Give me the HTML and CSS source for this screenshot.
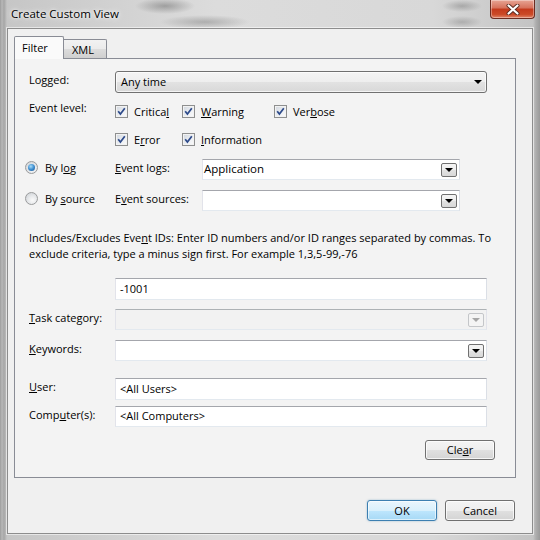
FILE: index.html
```html
<!DOCTYPE html>
<html>
<head>
<meta charset="utf-8">
<link rel="stylesheet" href="styles.css">
</head>
<body>
<div class="window">
  <div class="titlebar">
    <span class="title">Create Custom View</span>
    <div class="close">
      <svg width="14" height="11" viewBox="0 0 14 11"><path d="M2.5 1.5 L11.5 9.5 M11.5 1.5 L2.5 9.5" stroke="#5a2a20" stroke-width="4" stroke-linecap="round"/><path d="M2.5 1.5 L11.5 9.5 M11.5 1.5 L2.5 9.5" stroke="#ffffff" stroke-width="2.2" stroke-linecap="round"/></svg>
    </div>
  </div>
  <div class="client">
    <div class="tabs">
      <div class="tab active">Filter</div>
      <div class="tab">XML</div>
    </div>
    <div class="panel">
      <div class="row r-logged">
        <span class="lbl">Logged:</span>
        <div class="select"><span>Any time</span><span class="tri"></span></div>
      </div>
      <div class="row r-level1">
        <span class="lbl">Event level:</span>
        <div class="checks">
          <span class="chk w1"><span class="cb"><svg width="11" height="11" viewBox="0 0 11 11"><path d="M2.2 5.2 L4.4 8 L8.8 2.2" stroke="#2d4a8a" stroke-width="1.7" fill="none"/></svg></span><span>Critica<u>l</u></span></span>
          <span class="chk w2"><span class="cb"><svg width="11" height="11" viewBox="0 0 11 11"><path d="M2.2 5.2 L4.4 8 L8.8 2.2" stroke="#2d4a8a" stroke-width="1.7" fill="none"/></svg></span><span><u>W</u>arning</span></span>
          <span class="chk"><span class="cb"><svg width="11" height="11" viewBox="0 0 11 11"><path d="M2.2 5.2 L4.4 8 L8.8 2.2" stroke="#2d4a8a" stroke-width="1.7" fill="none"/></svg></span><span>Ver<u>b</u>ose</span></span>
        </div>
      </div>
      <div class="row r-level2">
        <span class="lbl"></span>
        <div class="checks">
          <span class="chk w1"><span class="cb"><svg width="11" height="11" viewBox="0 0 11 11"><path d="M2.2 5.2 L4.4 8 L8.8 2.2" stroke="#2d4a8a" stroke-width="1.7" fill="none"/></svg></span><span>E<u>r</u>ror</span></span>
          <span class="chk w2"><span class="cb"><svg width="11" height="11" viewBox="0 0 11 11"><path d="M2.2 5.2 L4.4 8 L8.8 2.2" stroke="#2d4a8a" stroke-width="1.7" fill="none"/></svg></span><span><u>I</u>nformation</span></span>
        </div>
      </div>
      <div class="row r-log">
        <span class="lbl radio-lbl"><span class="radio on"></span><span>By l<u>o</u>g</span></span>
        <span class="lbl2"><u>E</u>vent logs:</span>
        <div class="combo short"><span class="val">Application</span><span class="dbtn"><span class="tri"></span></span></div>
      </div>
      <div class="row r-source">
        <span class="lbl radio-lbl"><span class="radio"></span><span>By <u>s</u>ource</span></span>
        <span class="lbl2">E<u>v</u>ent sources:</span>
        <div class="combo short"><span class="val"></span><span class="dbtn"><span class="tri"></span></span></div>
      </div>
      <p class="desc">Includes/Excludes Eve<u>n</u>t IDs: Enter ID numbers and/or ID ranges separated by commas. To<br>exclude criteria, type a minus sign first. For example 1,3,5-99,-76</p>
      <div class="row r-ids">
        <span class="lbl"></span>
        <div class="input">-1001</div>
      </div>
      <div class="row r-task">
        <span class="lbl"><u>T</u>ask category:</span>
        <div class="combo disabled"><span class="val"></span><span class="dbtn"><span class="tri"></span></span></div>
      </div>
      <div class="row r-kw">
        <span class="lbl"><u>K</u>eywords:</span>
        <div class="combo"><span class="val"></span><span class="dbtn"><span class="tri"></span></span></div>
      </div>
      <div class="row r-user">
        <span class="lbl"><u>U</u>ser:</span>
        <div class="input">&lt;All Users&gt;</div>
      </div>
      <div class="row r-comp">
        <span class="lbl">Comp<u>u</u>ter(s):</span>
        <div class="input">&lt;All Computers&gt;</div>
      </div>
      <div class="row r-clear">
        <button class="btn clear">Cle<u>a</u>r</button>
      </div>
    </div>
    <div class="footer">
      <button class="btn ok">OK</button>
      <button class="btn">Cancel</button>
    </div>
  </div>
</div>
</body>
</html>
```

FILE: styles.css
```css
html, body {
  margin: 0;
  padding: 0;
}
body {
  width: 540px;
  height: 540px;
  overflow: hidden;
  font-family: "Open Sans", "Segoe UI", sans-serif;
  font-size: 11px;
  color: #000;
}
.window {
  width: 540px;
  height: 540px;
  box-sizing: border-box;
  padding: 0 7px 6px 7px;
  display: flex;
  flex-direction: column;
  background:
    radial-gradient(ellipse 30px 8px at 165px 6px, rgba(90,90,90,0.45), rgba(90,90,90,0) 100%),
    radial-gradient(ellipse 45px 7px at 205px 22px, rgba(90,90,90,0.35), rgba(90,90,90,0) 100%),
    radial-gradient(ellipse 20px 6px at 462px 6px, rgba(90,90,90,0.35), rgba(90,90,90,0) 100%),
    radial-gradient(ellipse 20px 6px at 462px 22px, rgba(90,90,90,0.3), rgba(90,90,90,0) 100%),
    linear-gradient(to right, #9c9c9c 0px, #b8b8b8 2px, #a6a6a6 4px, #c6c6c6 7px, #dcdcdc 40%, #d8d8d8 80%, #c4c4c4 533px, #adadad 536px, #9a9a9a 540px);
}
.titlebar {
  height: 28px;
  margin: 0 -7px;
  display: flex;
  justify-content: space-between;
  align-items: flex-start;
}
.title {
  margin: 6px 0 0 11px;
  font-size: 11.5px;
  color: #000;
  text-shadow: 0 0 6px #ffffff, 0 0 3px #ffffff;
}
.close {
  width: 45px;
  height: 19px;
  margin-right: 5px;
  box-sizing: border-box;
  border: 1px solid #6b2c21;
  border-top: none;
  border-radius: 0 0 4px 4px;
  background: linear-gradient(to bottom, #e7a595 0%, #d6705a 45%, #c3391c 50%, #cb4a27 80%, #e0866a 100%);
  box-shadow: inset 0 0 0 1px rgba(255,255,255,0.35);
  display: flex;
  align-items: center;
  justify-content: center;
}
.client {
  flex: 1;
  background: #f0f0f0;
  border: 1px solid #8d8d8d;
  box-shadow: 0 0 0 1px rgba(255,255,255,0.55);
  padding: 7px 0 0 6px;
  display: flex;
  flex-direction: column;
}
.tabs {
  display: flex;
  align-items: flex-end;
  height: 22px;
}
.tab {
  box-sizing: border-box;
  height: 19px;
  width: 43px;
  border: 1px solid #898c95;
  border-bottom: none;
  border-left: none;
  border-radius: 0 2px 0 0;
  background: linear-gradient(to bottom, #f2f2f2, #ebebeb 50%, #dddddd 50%, #cfcfcf);
  padding: 2px 0 0 8px;
}
.tab.active {
  width: 50px;
  height: 23px;
  border-left: 1px solid #898c95;
  border-radius: 2px 2px 0 0;
  background: #fafafa;
  padding: 3px 0 0 7px;
  margin-bottom: -1px;
  position: relative;
  z-index: 1;
}
.panel {
  box-sizing: border-box;
  width: 502px;
  height: 420px;
  border: 1px solid #898c95;
  background: #f3f3f3;
  padding: 12px 28px 0 14px;
  display: flex;
  flex-direction: column;
}
.row {
  display: flex;
  align-items: center;
}
.lbl {
  width: 86px;
  flex: none;
  padding-bottom: 2px;
}
.lbl2 {
  width: 87px;
  flex: none;
  padding-bottom: 3px;
}
.r-logged { height: 22px; }
.r-level1 { height: 22px; margin-top: 7px; }
.r-level2 { height: 22px; margin-top: 6px; }
.r-log { height: 21px; margin-top: 9px; }
.r-source { height: 21px; margin-top: 10px; }
.r-ids { height: 22px; margin-top: 16px; }
.r-task { height: 21px; margin-top: 9px; }
.r-kw { height: 21px; margin-top: 10px; }
.r-user { height: 22px; margin-top: 17px; }
.r-comp { height: 21px; margin-top: 6px; }
.r-clear { margin-top: 13px; justify-content: flex-end; margin-right: -8px; }
.r-logged .lbl { padding-bottom: 5px; }
.r-level1 .lbl { padding-bottom: 7px; }
.r-log .lbl, .r-source .lbl, .r-log .lbl2, .r-source .lbl2 { padding-bottom: 5px; }
.r-task .lbl, .r-kw .lbl { padding-bottom: 4px; }
.r-user .lbl, .r-comp .lbl { padding-bottom: 5px; }

.select {
  flex: 1;
  height: 22px;
  box-sizing: border-box;
  border: 1px solid #707070;
  border-radius: 3px;
  background: linear-gradient(to bottom, #f4f4f4 0%, #eeeeee 50%, #e2e2e2 51%, #d8d8d8 100%);
  box-shadow: inset 0 0 0 1px rgba(255,255,255,0.7);
  display: flex;
  align-items: center;
  justify-content: space-between;
  padding: 0 4px 1px 5px;
}
.tri {
  width: 0;
  height: 0;
  border-left: 4px solid transparent;
  border-right: 4px solid transparent;
  border-top: 4px solid #000;
}
.checks {
  display: flex;
  align-items: center;
}
.chk {
  display: flex;
  align-items: center;
  gap: 6px;
}
.chk.w1 { width: 67px; }
.chk.w2 { width: 92px; }
.cb {
  width: 13px;
  height: 13px;
  box-sizing: border-box;
  border: 1px solid #8e8f8f;
  background: linear-gradient(135deg, #d0d6de 0%, #eef0f3 60%, #fbfbfb 100%);
  box-shadow: inset 0 0 0 1px #f2f2f2;
  display: flex;
  align-items: center;
  justify-content: center;
  flex: none;
}
.radio-lbl {
  display: flex;
  align-items: center;
  gap: 7px;
  margin-left: -4px;
  width: 90px;
}
.radio {
  width: 13px;
  height: 13px;
  box-sizing: border-box;
  border-radius: 50%;
  border: 1px solid #9a9b9c;
  background: radial-gradient(circle at 60% 65%, #fafafa 0%, #e6e8ea 45%, #c8ccd1 100%);
  display: flex;
  align-items: center;
  justify-content: center;
  flex: none;
}
.radio.on::after {
  content: "";
  width: 7px;
  height: 7px;
  border-radius: 50%;
  background: radial-gradient(circle at 40% 35%, #a9dcf8 0%, #3d8ed0 50%, #1a4f8b 100%);
}
.combo, .input {
  flex: 1;
  box-sizing: border-box;
  height: 21px;
  background: #fff;
  border: 1px solid;
  border-color: #a4a6ac #dbdfe6 #e3e9ef #e2e3ea;
  display: flex;
  align-items: center;
}
.input {
  height: 22px;
  padding: 0 0 2px 4px;
}
.r-comp .input { height: 21px; }
.combo.short {
  flex: none;
  width: 258px;
}
.combo .val {
  flex: 1;
  padding: 0 0 2px 1px;
  font-size: 11.5px;
}
.dbtn {
  width: 16px;
  height: 14px;
  box-sizing: border-box;
  margin-right: 2px;
  border: 1px solid #707070;
  border-radius: 2px;
  background: linear-gradient(to bottom, #f4f4f4 0%, #eeeeee 50%, #e2e2e2 51%, #d8d8d8 100%);
  display: flex;
  align-items: center;
  justify-content: center;
}
.combo.disabled {
  background: #f2f2f2;
  border-color: #adb2b5 #e2e3ea #e3e9ef #e2e3ea;
}
.combo.disabled .dbtn {
  border-color: #c4c6c9;
  background: #f4f4f4;
}
.combo.disabled .tri {
  border-top-color: #a6a6a6;
}
.desc {
  margin: 19px 0 0 0;
  line-height: 16px;
  white-space: nowrap;
}
.btn {
  font-family: inherit;
  font-size: 11px;
  color: #000;
  box-sizing: border-box;
  width: 70px;
  height: 21px;
  border: 1px solid #707070;
  border-radius: 3px;
  background: linear-gradient(to bottom, #f4f4f4 0%, #eeeeee 50%, #e0e0e0 51%, #d4d4d4 100%);
  box-shadow: inset 0 0 0 1px rgba(255,255,255,0.75);
  padding: 0 0 1px 0;
  margin: 0;
}
.btn.clear { height: 20px; }
.btn.ok {
  border-color: #3c7fb1;
  background: linear-gradient(to bottom, #eaf6fd 0%, #d9f0fc 50%, #bee6fd 51%, #a7d9f5 100%);
  box-shadow: inset 0 0 0 1px rgba(255,255,255,0.6), 0 0 2px rgba(60,127,177,0.5);
}
.footer {
  display: flex;
  justify-content: flex-end;
  gap: 8px;
  margin-top: 22px;
  padding-right: 17px;
}
```
